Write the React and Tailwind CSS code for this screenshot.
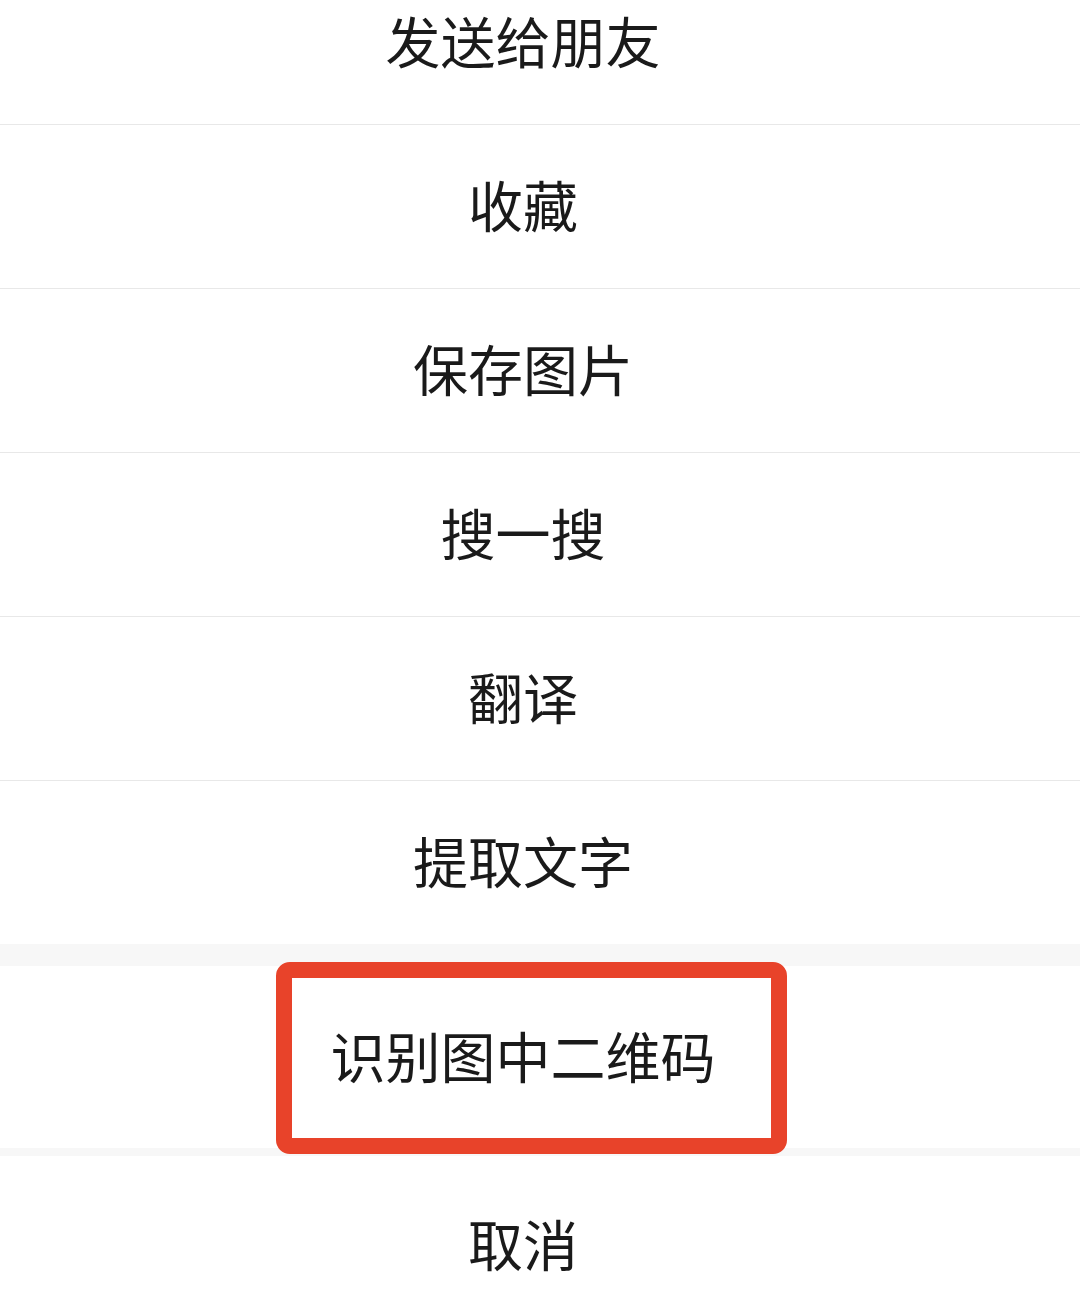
import React from 'react';

const items = ['发送给朋友', '收藏', '保存图片', '搜一搜', '翻译', '提取文字'];

function Row({ label, className = '' }) {
  return (
    <div className={`flex items-center justify-center pr-[34px] pb-[6px] text-[55px] leading-none text-[#1a1a1a] ${className}`}>
      {label}
    </div>
  );
}

export default function App() {
  return (
    <div
      className="w-[1080px] h-[1290px] overflow-hidden bg-[#f7f7f7]"
      style={{ fontFamily: '"Noto Sans CJK SC", "Noto Sans", sans-serif' }}
    >
      <div className="-mt-[39px] bg-white">
        {items.map((label, i) => (
          <Row
            key={label}
            label={label}
            className={i < items.length - 1 ? 'h-[164px] border-b-[1.5px] border-[#e8e8e8]' : 'h-[163px]'}
          />
        ))}
      </div>

      {/* gap */}
      <div className="h-[22px]" />

      <div className="relative bg-white">
        <Row label="识别图中二维码" className="h-[182px]" />
        {/* highlight annotation */}
        <div className="absolute left-[276px] -top-[4px] w-[511px] h-[192px] rounded-[14px] border-[16px] border-[#e8432a]" />
      </div>

      <div className="h-[8px]" />

      <div className="bg-white">
        <Row label="取消" className="h-[178px]" />
      </div>
    </div>
  );
}
